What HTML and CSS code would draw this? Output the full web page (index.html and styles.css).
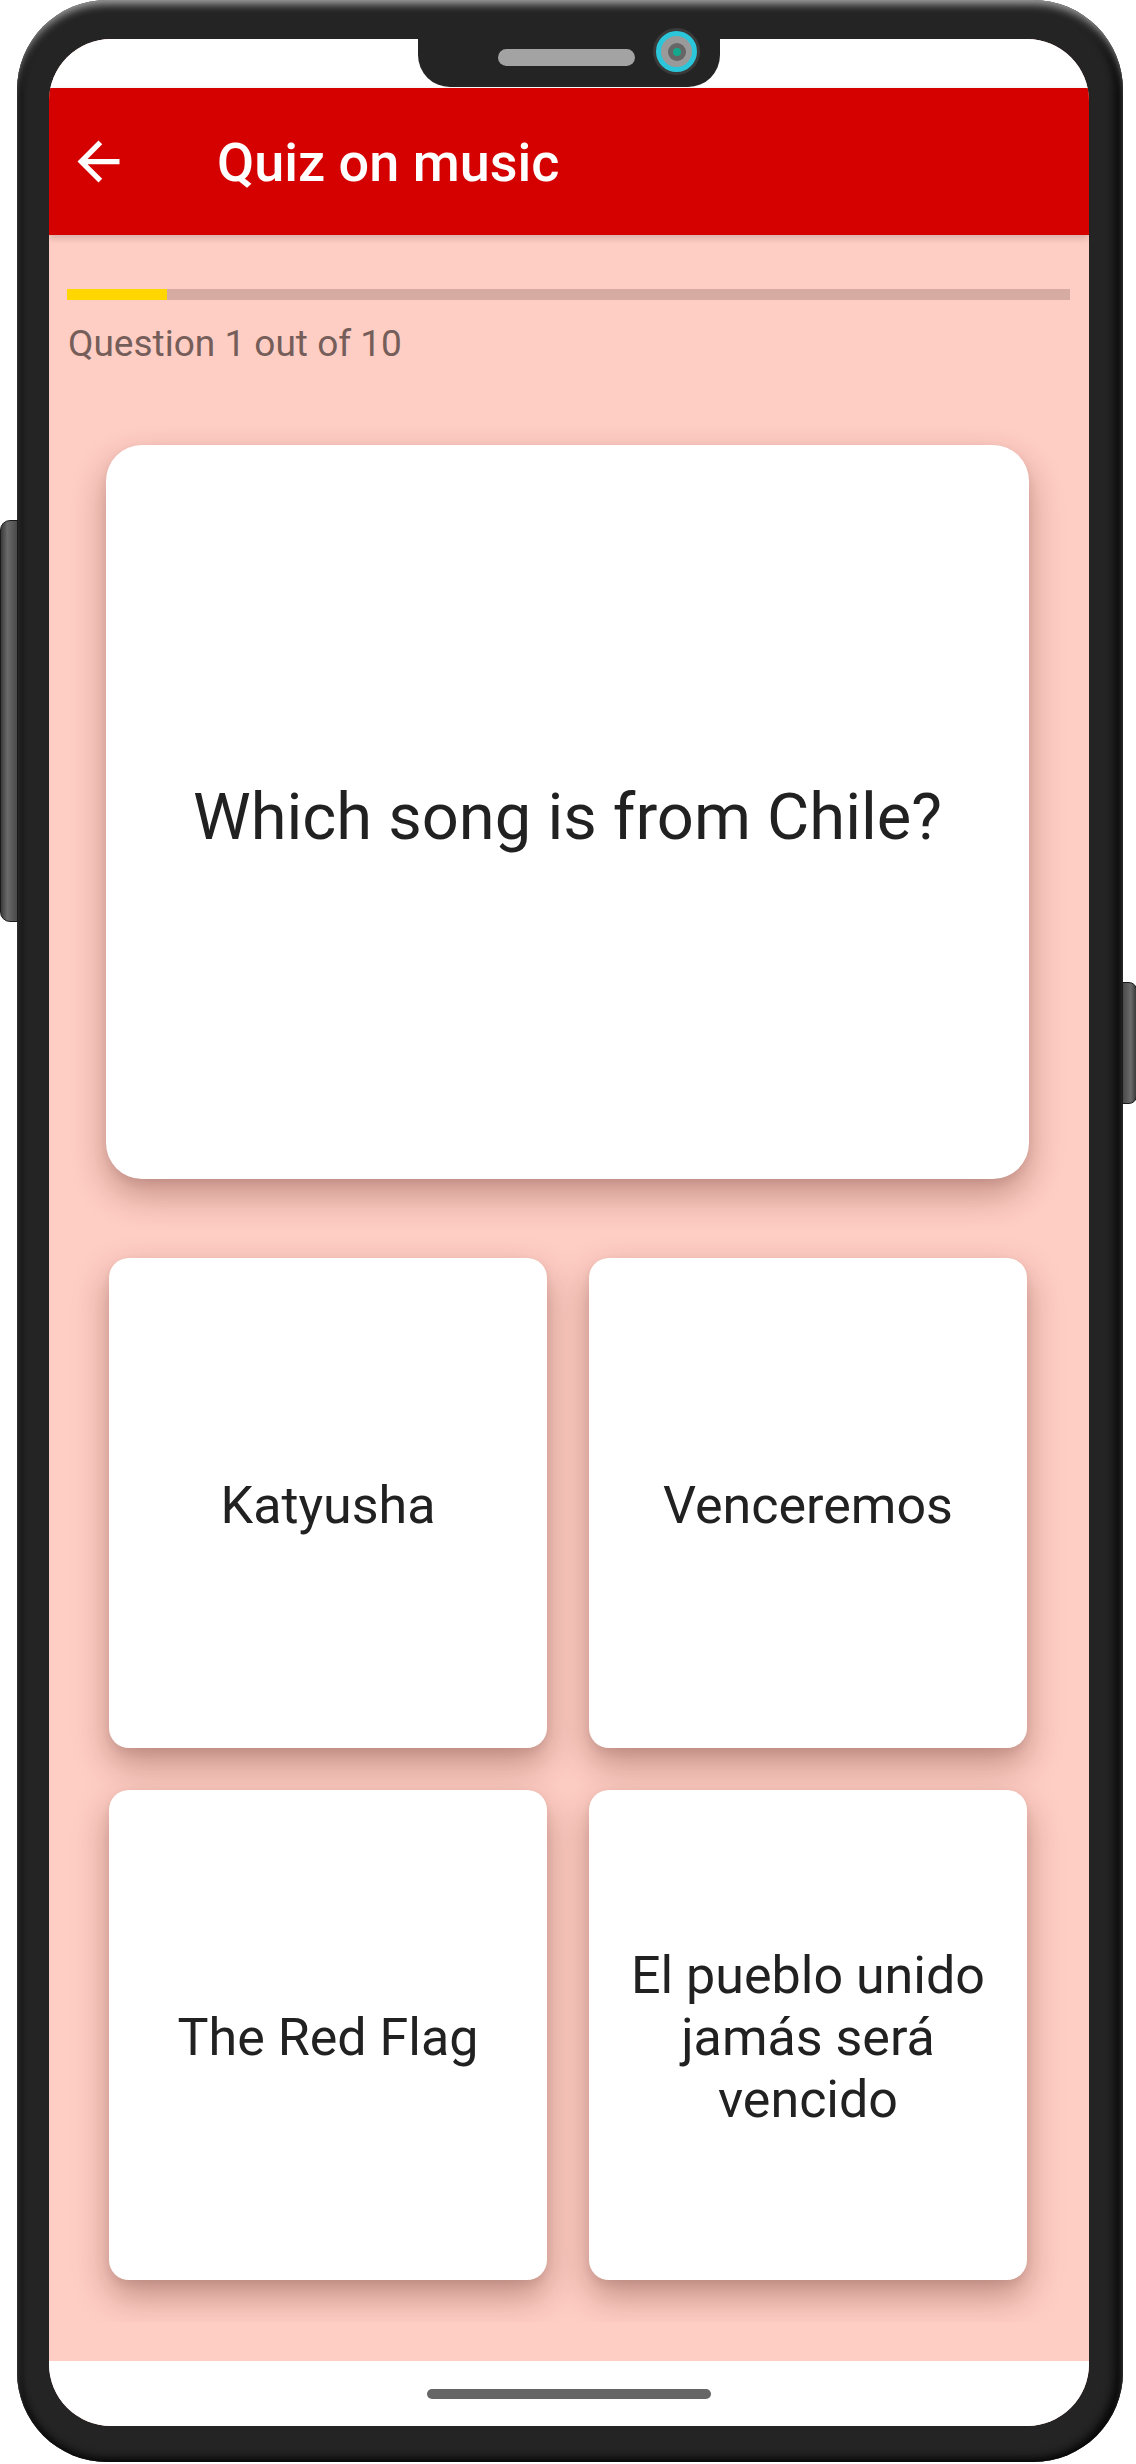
FILE: index.html
```html
<!DOCTYPE html>
<html lang="en">
<head>
<meta charset="utf-8">
<title>Quiz on music</title>
<link rel="stylesheet" href="styles.css">
</head>
<body>
<div class="device">
  <span class="side-btn side-btn-left"></span>
  <span class="side-btn side-btn-right"></span>
  <div class="notch">
    <span class="speaker"></span>
    <span class="camera"><span class="camera-ring"><span class="camera-lens"><span class="camera-dot"></span></span></span></span>
  </div>
  <div class="screen">
    <div class="statusbar"></div>
    <header class="appbar">
      <svg class="back-icon" viewBox="0 0 24 24" aria-hidden="true"><path d="M20 11H7.83l5.59-5.59L12 4l-8 8 8 8 1.41-1.41L7.83 13H20v-2z"/></svg>
      <h1 class="appbar-title">Quiz on music</h1>
    </header>
    <main class="content">
      <div class="progress"><div class="progress-fill" style="width:10%"></div></div>
      <p class="counter">Question 1 out of 10</p>
      <div class="scroller">
        <div class="question-card">Which song is from Chile?</div>
        <div class="answers">
          <button class="answer">Katyusha</button>
          <button class="answer">Venceremos</button>
          <button class="answer">The Red Flag</button>
          <button class="answer">El pueblo unido jamás será vencido</button>
        </div>
      </div>
    </main>
    <div class="navbar"><span class="home-indicator"></span></div>
  </div>
</div>
</body>
</html>
```

FILE: styles.css
```css
html, body {
  margin: 0;
  padding: 0;
  background: #ffffff;
}

body {
  width: 1136px;
  height: 2464px;
  font-family: Roboto, "Noto Sans", "Liberation Sans", sans-serif;
}

.device {
  position: relative;
  box-sizing: border-box;
  margin-left: 17px;
  width: 1106px;
  height: 2462px;
  padding: 39px 34px 36px 32px;
  border-radius: 90px;
  background: #242424;
  box-shadow:
    inset 0 7px 9px -3px rgba(215, 215, 215, 0.75),
    inset 7px 0 6px -3px #0c0c0c,
    inset -12px 0 8px -4px #080808,
    inset 0 -8px 8px -4px #0a0a0a;
}

.side-btn {
  position: absolute;
  display: block;
  background: linear-gradient(to right, #3a3a3a, #6a6a6a 40%, #4a4a4a);
  border: 1px solid #1a1a1a;
}

.side-btn-left {
  left: -17px;
  top: 520px;
  width: 16px;
  height: 400px;
  border-radius: 10px 0 0 10px;
}

.side-btn-right {
  right: -14px;
  top: 982px;
  width: 13px;
  height: 120px;
  border-radius: 0 8px 8px 0;
  background: linear-gradient(to left, #3a3a3a, #6a6a6a 40%, #4a4a4a);
}

.notch {
  position: absolute;
  z-index: 5;
  left: 401px;
  top: 39px;
  width: 302px;
  height: 48px;
  background: #242424;
  border-radius: 0 0 32px 32px;
}

.speaker {
  position: absolute;
  left: 80px;
  top: 10px;
  width: 137px;
  height: 17px;
  border-radius: 9px;
  background: #a3a3a3;
}

.camera {
  position: absolute;
  left: 235px;
  top: -11px;
  width: 47px;
  height: 47px;
  border-radius: 50%;
  background: #3a3a3a;
  display: flex;
  align-items: center;
  justify-content: center;
}

.camera-ring {
  box-sizing: border-box;
  width: 41px;
  height: 41px;
  border-radius: 50%;
  border: 5px solid #2cc6da;
  background: #9a9a9a;
  display: flex;
  align-items: center;
  justify-content: center;
}

.camera-lens {
  width: 18px;
  height: 18px;
  border-radius: 50%;
  background: #666666;
  display: flex;
  align-items: center;
  justify-content: center;
}

.camera-dot {
  width: 8px;
  height: 8px;
  border-radius: 50%;
  background: #14a98c;
}

.screen {
  position: relative;
  display: flex;
  flex-direction: column;
  width: 1040px;
  height: 2387px;
  border-radius: 62px;
  overflow: hidden;
  background: #fecdc3;
}

.statusbar {
  flex: 0 0 49px;
  background: #ffffff;
}

.appbar {
  position: relative;
  z-index: 2;
  flex: 0 0 147px;
  box-sizing: border-box;
  display: flex;
  align-items: center;
  padding: 3px 0 0 18px;
  background: #d50000;
  box-shadow: 0 3px 7px rgba(0, 0, 0, 0.16);
}

.back-icon {
  width: 63px;
  height: 63px;
  margin-top: -4px;
  fill: #ffffff;
  flex: 0 0 auto;
}

.appbar-title {
  margin: 0 0 0 87px;
  font-size: 54px;
  font-weight: 500;
  color: #ffffff;
  line-height: 1.17;
}

.content {
  flex: 1 1 auto;
  display: flex;
  flex-direction: column;
  padding: 54px 19px 0 18px;
  background: #fecdc3;
}

.progress {
  height: 11px;
  background: #d6aba2;
}

.progress-fill {
  height: 100%;
  background: #ffd600;
}

.counter {
  margin: 22px 0 0 1px;
  font-size: 37px;
  line-height: 43px;
  color: #755e5a;
}

.scroller {
  overflow: hidden;
  padding-bottom: 42px;
}

.question-card {
  box-sizing: border-box;
  height: 734px;
  margin: 80px 41px 0 39px;
  padding: 10px 30px 0;
  display: flex;
  align-items: center;
  justify-content: center;
  text-align: center;
  border-radius: 36px;
  background: #ffffff;
  font-size: 65px;
  color: #212121;
  box-shadow: 0 16px 34px rgba(80, 20, 10, 0.32), 0 4px 10px rgba(0, 0, 0, 0.07);
}

.answers {
  display: grid;
  grid-template-columns: 438px 438px;
  grid-auto-rows: 490px;
  column-gap: 42px;
  row-gap: 42px;
  margin: 79px 0 0 42px;
}

.answer {
  box-sizing: border-box;
  display: flex;
  align-items: center;
  justify-content: center;
  padding: 6px 22px 0;
  border: none;
  border-radius: 20px;
  background: #ffffff;
  font-family: inherit;
  font-size: 52px;
  line-height: 62px;
  color: #212121;
  text-align: center;
  box-shadow: 0 16px 34px rgba(80, 20, 10, 0.34), 0 4px 10px rgba(0, 0, 0, 0.07);
}

.navbar {
  flex: 0 0 65px;
  display: flex;
  align-items: center;
  justify-content: center;
  background: #ffffff;
}

.home-indicator {
  display: block;
  width: 284px;
  height: 10px;
  border-radius: 5px;
  background: #666666;
}
```
